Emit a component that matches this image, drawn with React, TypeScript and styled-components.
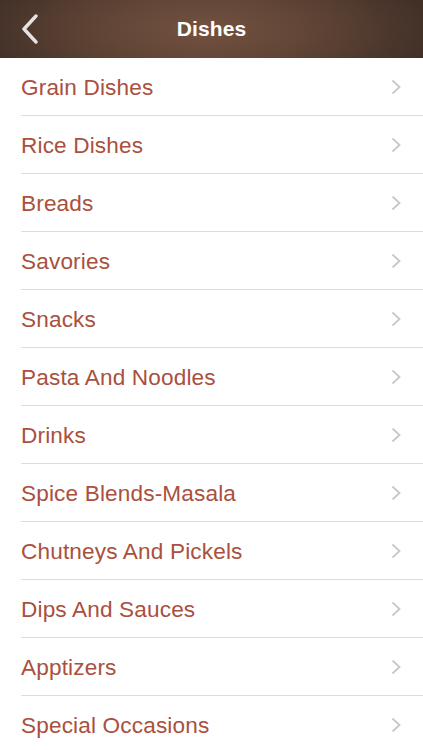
import React from "react";
import styled, { createGlobalStyle } from "styled-components";

const dishes = [
  "Grain Dishes",
  "Rice Dishes",
  "Breads",
  "Savories",
  "Snacks",
  "Pasta And Noodles",
  "Drinks",
  "Spice Blends-Masala",
  "Chutneys And Pickels",
  "Dips And Sauces",
  "Apptizers",
  "Special Occasions",
];

const App = () => {
  return (
    <Screen>
      <GlobalStyle />
      <NavBar>
        <BackButton aria-label="Back">
          <svg width="18" height="30" viewBox="0 0 18 30">
            <path
              d="M15 2 L3 15 L15 28"
              fill="none"
              stroke="#e6e2df"
              strokeWidth="3.4"
              strokeLinecap="round"
              strokeLinejoin="round"
            />
          </svg>
        </BackButton>
        <Title>Dishes</Title>
      </NavBar>
      <List>
        {dishes.map((name) => (
          <Row key={name}>
            <Label>{name}</Label>
            <Chevron width="10" height="16" viewBox="0 0 10 16">
              <path
                d="M1.5 1.5 L8.5 8 L1.5 14.5"
                fill="none"
                stroke="#c7c7cc"
                strokeWidth="1.8"
              />
            </Chevron>
          </Row>
        ))}
      </List>
    </Screen>
  );
};

export default App;

const GlobalStyle = createGlobalStyle`
  body {
    margin: 0;
    background: #ffffff;
    font-family: "Liberation Sans", Arial, sans-serif;
  }
`;

const Screen = styled.div`
  width: 423px;
  height: 750px;
  overflow: hidden;
  background: #ffffff;
`;

const NavBar = styled.div`
  position: relative;
  height: 58px;
  display: flex;
  align-items: center;
  justify-content: center;
  background: radial-gradient(
    ellipse 260px 90px at 205px 30px,
    #735241 0%,
    #5e4334 45%,
    #46332a 80%,
    #3b2b23 100%
  );
`;

const BackButton = styled.div`
  position: absolute;
  left: 21px;
  top: 14px;
  width: 18px;
  height: 30px;
  display: flex;
`;

const Title = styled.div`
  color: #ffffff;
  font-size: 21px;
  font-weight: 700;
  letter-spacing: 0.1px;
`;

const List = styled.div`
  display: flex;
  flex-direction: column;
`;

const Row = styled.div`
  height: 57px;
  margin-left: 21px;
  padding-right: 22px;
  display: flex;
  align-items: center;
  justify-content: space-between;
  border-bottom: 1px solid #dcdcdc;
`;

const Label = styled.div`
  color: #a9503e;
  font-size: 22.6px;
  letter-spacing: 0.15px;
  padding-top: 3px;
`;

const Chevron = styled.svg`
  flex-shrink: 0;
`;
